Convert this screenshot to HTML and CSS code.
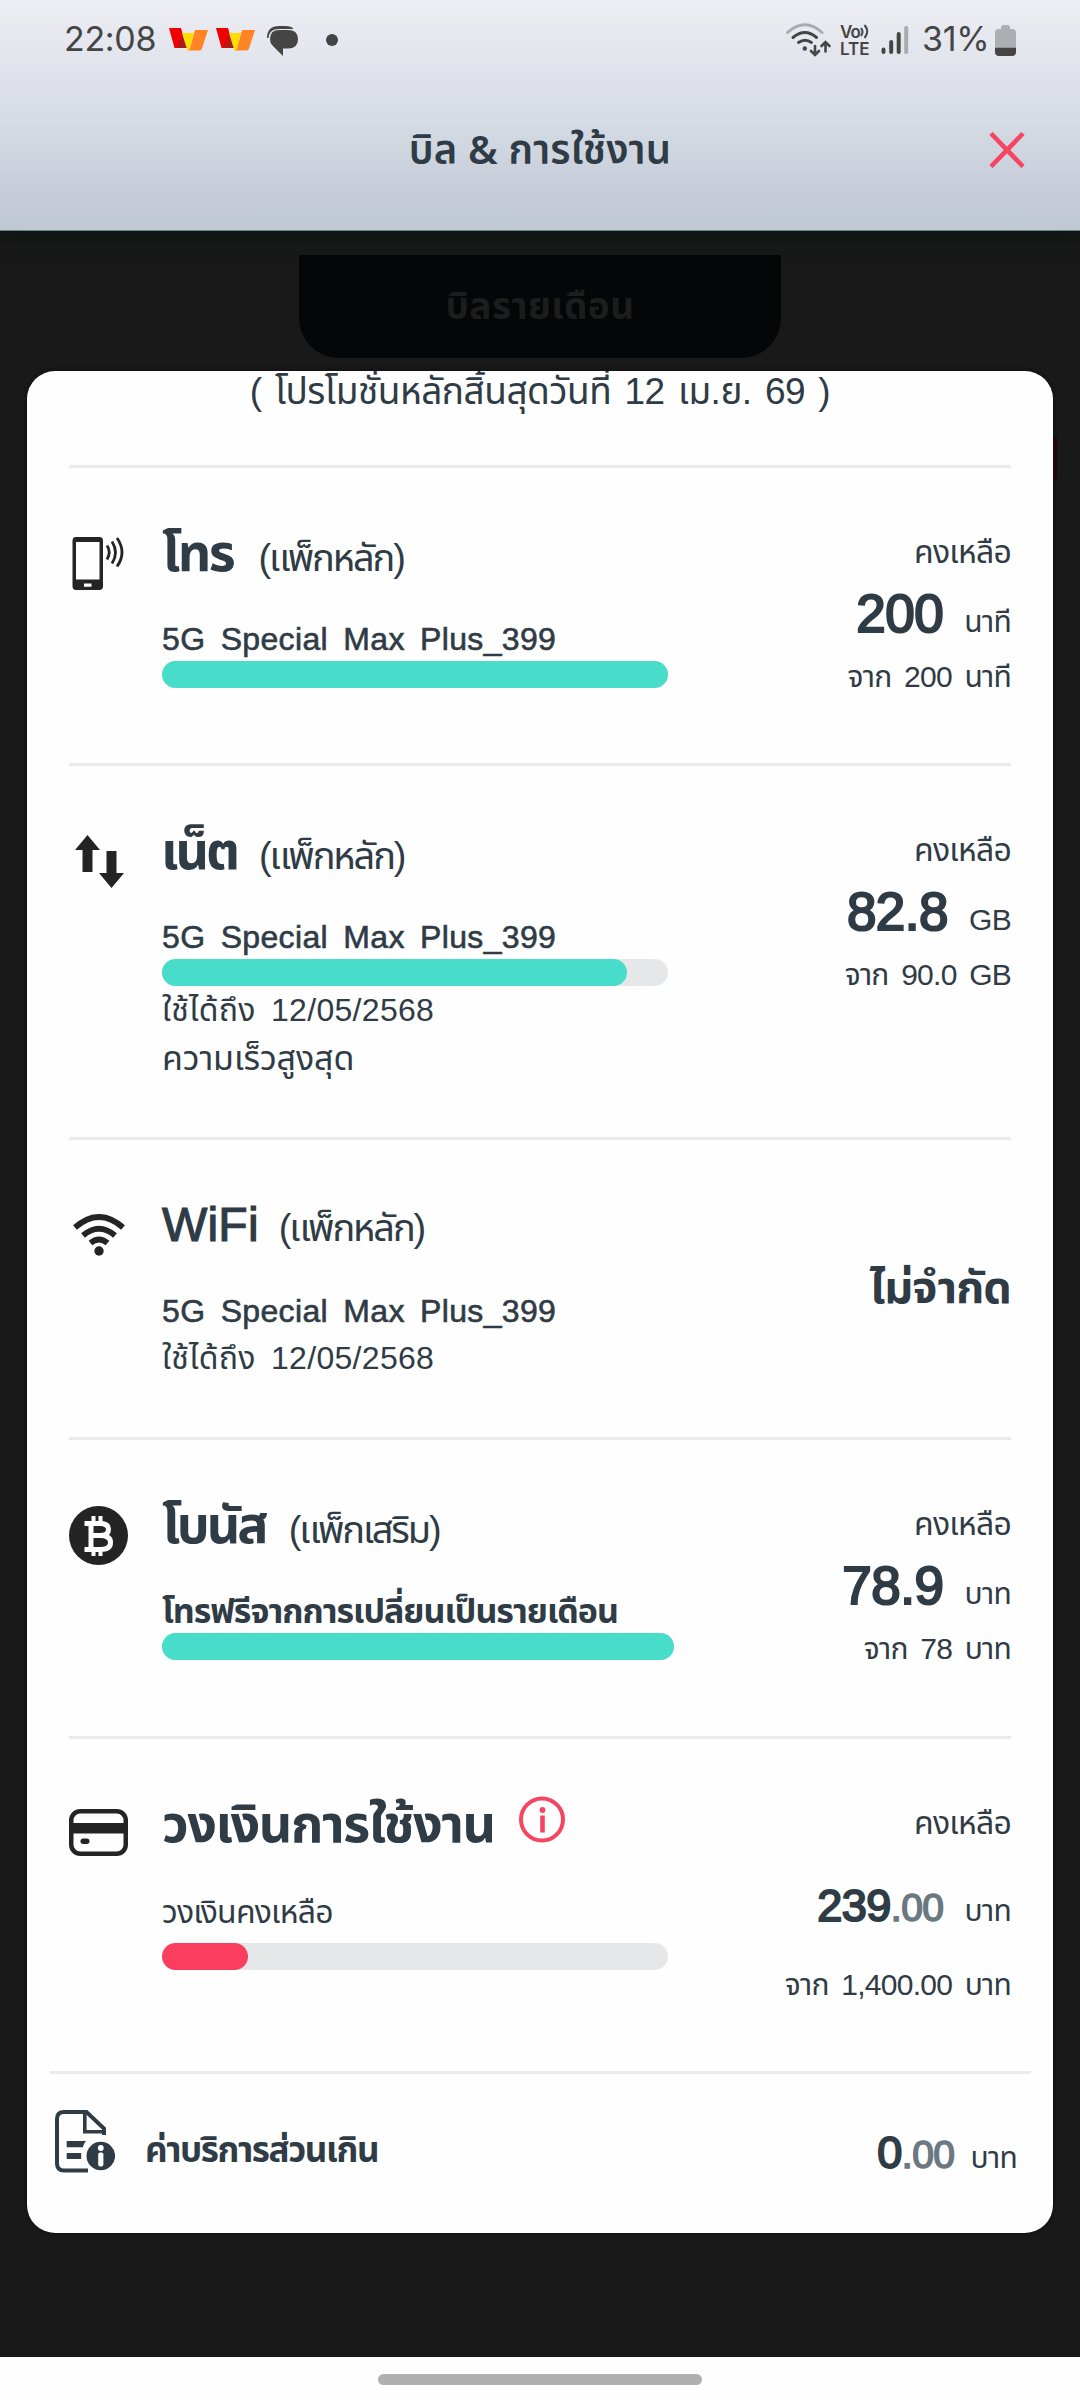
FILE: index.html
```html
<!DOCTYPE html>
<html lang="th">
<head>
<meta charset="utf-8">
<title>บิล &amp; การใช้งาน</title>
<link rel="stylesheet" href="styles.css">
</head>
<body>
<header class="top">
  <div class="status">
    <div class="status-side">
      <span class="clock">22:08</span>
      <svg class="wmark" viewBox="0 0 40 24" width="40" height="24"><path fill="#f00000" d="M0 0h12l5.500 20H5.500z"/><path fill="#a81c1c" d="M13 7l5.500 13H8.500z"/><path fill="#ffdd00" d="M13 5h12l-4.500 17.500h-2z"/><path fill="#ff8426" d="M26 2h13l-6 18.500q-.6 2-2.600 2H18.500q2 0 2.600-2z"/></svg>
      <svg class="wmark" viewBox="0 0 40 24" width="40" height="24"><path fill="#f00000" d="M0 0h12l5.500 20H5.500z"/><path fill="#a81c1c" d="M13 7l5.500 13H8.500z"/><path fill="#ffdd00" d="M13 5h12l-4.500 17.500h-2z"/><path fill="#ff8426" d="M26 2h13l-6 18.500q-.6 2-2.600 2H18.500q2 0 2.600-2z"/></svg>
      <svg class="chat" viewBox="0 0 32 32" width="32" height="32"><path fill="#454545" d="M0 12Q0 0 12 0h6q7 0 8.500 3H12Q2 3 1.500 12z"/><path fill="#454545" d="M12 4h9q10 0 10 9.200T21 22.500h-5V30L5.500 19.500Q3 17 3 13.200 3 4 12 4z"/></svg>
      <span class="dot"></span>
    </div>
    <div class="status-side">
      <svg viewBox="785 24 46 34" width="46" height="34" fill="none" stroke="#454545" stroke-width="3" stroke-linecap="round"><path stroke="#a9abb0" d="M786.500 33.500Q804 18 821 33.500"/><path d="M792 38.500q12-10 23.500 0M797.500 43.500q6.500-4.500 13 0"/><circle cx="803.800" cy="49.500" r="2.200" fill="#454545" stroke="none"/><path stroke-width="2.600" d="M814 47v8.500m-4-3.500l4 4 4-4M824.500 52.500v-9m-4 3.500l4-4 4 4"/></svg>
      <span class="volte"><span class="vo">Vo<svg viewBox="0 0 9 16" width="9" height="16" fill="none" stroke="#454545" stroke-width="2"><path d="M1 4q3 4 0 8M4.500 1q5.500 6.500 0 13"/></svg></span><span>LTE</span></span>
      <svg class="signal" viewBox="0 0 28 30" width="28" height="30" stroke="#454545" stroke-width="4" stroke-linecap="round"><path d="M2.500 24.500v2.500M10.200 17v10M17.700 9v18"/><path stroke="#a9abb0" d="M25.200 3v24"/></svg>
      <span class="percent">31%</span>
      <svg viewBox="0 0 21 31" width="21" height="31"><path fill="#adaeb2" d="M6 4V2.500Q6 0 8.500 0h4Q15 0 15 2.500V4h2.500Q21 4 21 8v14H0V8q0-4 3.500-4z"/><path fill="#454545" d="M0 22.500h21V27q0 4-4 4H4q-4 0-4-4z"/></svg>
    </div>
  </div>
  <div class="titlebar">
    <h1>บิล &amp; การใช้งาน</h1>
    <svg class="close" viewBox="0 0 36 36" width="36" height="36" stroke="#f64463" stroke-width="4.600"><path d="M2 1.500l32 33M34 1.500L2 34.500"/></svg>
  </div>
</header>

<main class="stage">
  <div class="tab">บิลรายเดือน</div>
  <section class="card">
    <p class="promo">( โปรโมชั่นหลักสิ้นสุดวันที่ 12 เม.ย. 69 )</p>

    <article class="row row-call">
      <svg class="icon icon-phone" viewBox="0 0 54 53" width="54" height="53"><path fill="#242424" fill-rule="evenodd" d="M4 0h23.500q3.500 0 3.500 4v45q0 4-3.500 4H4q-3.500 0-3.500-4V4Q.5 0 4 0zM4 5v37.500h23.500V5zM12 46.500v3.300h7.500v-3.300z"/><path fill="none" stroke="#242424" stroke-width="2.800" d="M35 8.500q4.500 6.500 0 14M40 4.500q7 11 0 22M45 1q10 14.500 0 28.500"/></svg>
      <div class="info">
        <h2><span class="name">โทร</span><span class="sub">(แพ็กหลัก)</span></h2>
        <p class="plan">5G Special Max Plus_399</p>
        <div class="bar"><div class="fill" style="width:100%"></div></div>
      </div>
      <div class="amount">
        <p class="left">คงเหลือ</p>
        <p class="value"><b>200</b><span>นาที</span></p>
        <p class="from">จาก 200 นาที</p>
      </div>
    </article>

    <article class="row row-net">
      <svg class="icon icon-arrows" viewBox="0 0 49 53" width="49" height="53" fill="#242424"><path d="M12.500 0L25 15h-7.500v22H7.500V15H0zM31.500 16h10v22H49L36.500 53 24 38h7.500z"/></svg>
      <div class="info">
        <h2><span class="name">เน็ต</span><span class="sub">(แพ็กหลัก)</span></h2>
        <p class="plan">5G Special Max Plus_399</p>
        <div class="bar"><div class="fill" style="width:91.8%"></div></div>
        <p class="date">ใช้ได้ถึง 12/05/2568</p>
        <p class="note">ความเร็วสูงสุด</p>
      </div>
      <div class="amount">
        <p class="left">คงเหลือ</p>
        <p class="value"><b>82.8</b><span>GB</span></p>
        <p class="from">จาก 90.0 GB</p>
      </div>
    </article>

    <article class="row row-wifi">
      <svg class="icon icon-wifi" viewBox="0 0 52 42" width="52" height="42" fill="none" stroke="#242424" stroke-width="5.800"><path d="M2 13.500Q26-7.500 50 13.500M10 21.500q16-13.500 32 0M17.500 29q8.500-7 17 0"/><circle cx="26" cy="37" r="4.700" fill="#242424" stroke="none"/></svg>
      <div class="info">
        <h2><span class="name latin">WiFi</span><span class="sub">(แพ็กหลัก)</span></h2>
        <p class="plan">5G Special Max Plus_399</p>
        <p class="date">ใช้ได้ถึง 12/05/2568</p>
      </div>
      <div class="amount unlimited">ไม่จำกัด</div>
    </article>

    <article class="row row-bonus">
      <svg class="icon icon-coin" viewBox="0 0 59 59" width="59" height="59"><circle cx="29.500" cy="29.500" r="29.500" fill="#242424"/><path fill="none" stroke="#fff" stroke-width="5" d="M15.500 17.500H31q8.500 0 8.500 6 0 6-8.500 6h-8H31q10.500 0 10.500 7T31 43.500H15.500M22 17v27"/><path stroke="#fff" stroke-width="4" d="M24.500 10v7M31.500 10v7M24.500 43.500V50M31.500 43.500V50"/></svg>
      <div class="info">
        <h2><span class="name">โบนัส</span><span class="sub">(แพ็กเสริม)</span></h2>
        <p class="plan thai">โทรฟรีจากการเปลี่ยนเป็นรายเดือน</p>
        <div class="bar wide"><div class="fill" style="width:100%"></div></div>
      </div>
      <div class="amount">
        <p class="left">คงเหลือ</p>
        <p class="value"><b>78.9</b><span>บาท</span></p>
        <p class="from">จาก 78 บาท</p>
      </div>
    </article>

    <article class="row row-credit">
      <svg class="icon icon-card" viewBox="0 0 59 47" width="59" height="47"><rect x="2.250" y="2.250" width="54.500" height="42.500" rx="9" fill="none" stroke="#242424" stroke-width="4.500"/><path fill="#242424" d="M2 14h55v10.500H2z"/><rect x="11.500" y="29.500" width="9" height="5.500" rx="2.700" fill="#242424"/></svg>
      <div class="info">
        <h2><span class="name long">วงเงินการใช้งาน</span><svg class="hint" viewBox="0 0 46 47" width="46" height="47"><circle cx="23" cy="23.500" r="21" fill="none" stroke="#f64463" stroke-width="4"/><circle cx="23.500" cy="14" r="2.900" fill="#f64463"/><path stroke="#f64463" stroke-width="4.600" d="M23.500 19.500v17"/></svg></h2>
        <p class="plan light">วงเงินคงเหลือ</p>
        <div class="bar low"><div class="fill danger" style="width:17%"></div></div>
      </div>
      <div class="amount">
        <p class="left">คงเหลือ</p>
        <p class="value money"><b>239<small>.00</small></b><span>บาท</span></p>
        <p class="from">จาก 1,400.00 บาท</p>
      </div>
    </article>

    <footer class="excess">
      <svg class="doc" viewBox="0 0 60 63" width="60" height="63"><path fill="none" stroke="#2f3b45" stroke-width="4" d="M33 60.500H9Q2 60.500 2 53.500V9Q2 2 9 2h22.500L49 18.500V25"/><path fill="none" stroke="#2f3b45" stroke-width="3.600" d="M29.800 3v18.800H47"/><path fill="#2f3b45" d="M11.700 31H31q-2.500 3-3.200 6.300H11.700zM11.700 43h14.500v6H11.700z"/><circle cx="45.800" cy="46" r="14.300" fill="#2f3b45"/><circle cx="45.800" cy="38" r="2.900" fill="#fff"/><rect x="43.200" y="42.500" width="5.200" height="14" rx="2" fill="#fff"/></svg>
      <span class="excess-name">ค่าบริการส่วนเกิน</span>
      <p class="value money"><b>0<small>.00</small></b><span>บาท</span></p>
    </footer>
  </section>
</main>

<nav class="gesture"><span></span></nav>
</body>
</html>
```
FILE: styles.css
```css
* { box-sizing: border-box; margin: 0; padding: 0; }

body {
  display: flex;
  flex-direction: column;
  width: 1080px;
  height: 2400px;
  overflow: hidden;
  background: #191919;
  color: #2f3b45;
  font: 400 32px/48px "Liberation Sans", "Noto Sans Thai", sans-serif;
  white-space: nowrap;
}

svg { display: block; flex: none; }

/* status bar and title */
.top {
  height: 231px;
  border-bottom: 1px solid #668591;
  background: linear-gradient(#edeef3 0, #e1e3ec 70px, #cfd6e0 150px, #c5cbd7 200px, #bfc9d2 230px);
  box-shadow: 0 4px 20px #0f1213;
}
.status {
  display: flex;
  justify-content: space-between;
  height: 80px;
  padding: 0 64px;
  color: #454545;
  font-family: Inter, sans-serif;
}
.status-side { display: flex; align-items: center; }
.clock, .percent { padding-bottom: 2px; font-size: 34px; letter-spacing: -.3px; }
.clock { width: 105px; }
.wmark { margin-right: 7px; }
.chat { margin: 4px 0 0 4px; }
.dot { width: 12px; height: 12px; margin-left: 27px; border-radius: 50%; background: #454545; }
.volte { display: flex; flex-direction: column; width: 44px; padding: 2px 0 0 8px; font-size: 17px; font-weight: 600; line-height: 17px; }
.vo { display: flex; letter-spacing: -.8px; }
.signal { margin-left: 5px; }
.percent { width: 86px; padding-left: 13px; }

.titlebar {
  display: grid;
  grid-template-columns: 56px 1fr 56px;
  align-items: center;
  justify-items: center;
  height: 137px;
  padding: 0 35px 0 44px;
}
.titlebar h1 { grid-column: 2; padding-right: 9px; font: 600 40px/60px "Noto Sans", "Noto Sans Thai", sans-serif; letter-spacing: .15px; }
.close { margin-top: 3px; justify-self: start; }

/* dimmed page behind the sheet */
.stage { position: relative; flex: 1; padding: 24px 27px 0; }
.stage::after {
  content: "";
  position: absolute;
  top: 206px;
  right: 23px;
  width: 4px;
  height: 44px;
  border-radius: 0 4px 4px 0;
  background: #22060c;
}
.tab {
  width: 482px;
  height: 103px;
  margin: 0 auto 13px;
  border-radius: 0 0 40px 40px;
  background: #040607;
  color: #1c1d1d;
  font-size: 37px;
  font-weight: 700;
  line-height: 103px;
  letter-spacing: .4px;
  text-align: center;
}

.card {
  height: 1862px;
  padding: 0 42px;
  border-radius: 28px;
  background: #fefefe;
  box-shadow: 0 0 4px #0d0d0d;
  overflow: hidden;
}
.promo {
  height: 97px;
  border-bottom: 3px solid #ebebec;
  font-size: 37px;
  line-height: 42px;
  letter-spacing: -.5px;
  word-spacing: 3.5px;
  text-align: center;
}

.row {
  display: grid;
  grid-template-columns: 93px 1fr auto;
  align-items: start;
  border-bottom: 3px solid #ebebec;
}
.row-call { height: 298px; }
.row-net { height: 374px; }
.row-wifi { height: 300px; }
.row-bonus { height: 299px; }
.row-credit { height: 332px; border: 0; }

.icon-phone { margin: 69px 0 0 3px; }
.icon-arrows { margin: 69px 0 0 6px; }
.icon-wifi { margin: 74px 0 0 4px; }
.icon-coin { margin-top: 66px; }
.icon-card { margin-top: 70px; }

.info { padding-top: 55px; }
h2 { display: flex; align-items: baseline; height: 61px; margin-bottom: 33px; line-height: 60px; font-weight: 400; }
.name { margin-right: 23px; font-size: 52px; font-weight: 700; letter-spacing: -3px; }
.row-call .name { margin-right: 25px; letter-spacing: -2.4px; }
.row-net .name { margin-left: -1px; margin-right: 22px; }
.name.long { letter-spacing: -1.4px; }
.name.latin { margin-right: 20px; font-size: 48px; font-weight: 400; letter-spacing: .2px; -webkit-text-stroke: 1.2px; }
.sub { font-size: 38px; letter-spacing: -2.1px; }
.hint { margin: 2px 0 0 1px; align-self: flex-start; }
.plan { height: 44px; line-height: 44px; letter-spacing: .35px; word-spacing: 6px; -webkit-text-stroke: .6px; }
.plan.thai { font-size: 34px; font-weight: 700; letter-spacing: -1px; -webkit-text-stroke: 0; }
.plan.light { line-height: 48px; letter-spacing: -.8px; -webkit-text-stroke: 0; }
.bar { width: 506px; height: 27px; border-radius: 14px; background: #e6e7e8; }
.bar.wide { width: 512px; }
.bar.low { margin-top: 11px; }
.fill { height: 27px; border-radius: 14px; background: #48dcca; }
.fill.danger { background: #fb3e5f; }
.date { letter-spacing: .3px; word-spacing: 6px; }
.row-wifi .date { margin-top: 1px; }
.note { font-size: 34px; letter-spacing: -.1px; }

.amount { display: flex; flex-direction: column; align-items: flex-end; padding-top: 60px; }
.left { letter-spacing: -.8px; }
.value { display: flex; align-items: baseline; gap: 21px; height: 64px; margin-top: 6px; font-size: 30px; line-height: 63px; letter-spacing: -.7px; }
.value b { font-size: 53px; font-weight: 400; letter-spacing: -.5px; -webkit-text-stroke: 2.2px; }
.from { margin-top: 7px; font-size: 30px; letter-spacing: -.75px; word-spacing: 5px; }
.value.money { margin-top: 27px; }
.value.money b { font-size: 45px; -webkit-text-stroke: 2px; }
.money small { color: #6b7881; font-size: 39px; letter-spacing: -.5px; -webkit-text-stroke: 1.6px; }
.row-credit .from { margin-top: 23px; }
.unlimited { padding-top: 116px; font-size: 45px; font-weight: 700; letter-spacing: -.9px; line-height: 64px; }

.excess {
  display: flex;
  height: 162px;
  margin: 0 -20px 0 -19px;
  padding: 0 14px 0 5px;
  border-top: 3px solid #ebebec;
}
.doc { margin-top: 36px; }
.excess-name { margin: 52px auto 0 30px; font-size: 35px; font-weight: 700; letter-spacing: -1.4px; }
.excess .value.money { margin-top: 47px; gap: 16px; }

.gesture { display: flex; justify-content: center; height: 43px; padding-top: 17px; background: #fefefe; }
.gesture span { width: 324px; height: 11px; border-radius: 6px; background: #b0b0b0; }
```
